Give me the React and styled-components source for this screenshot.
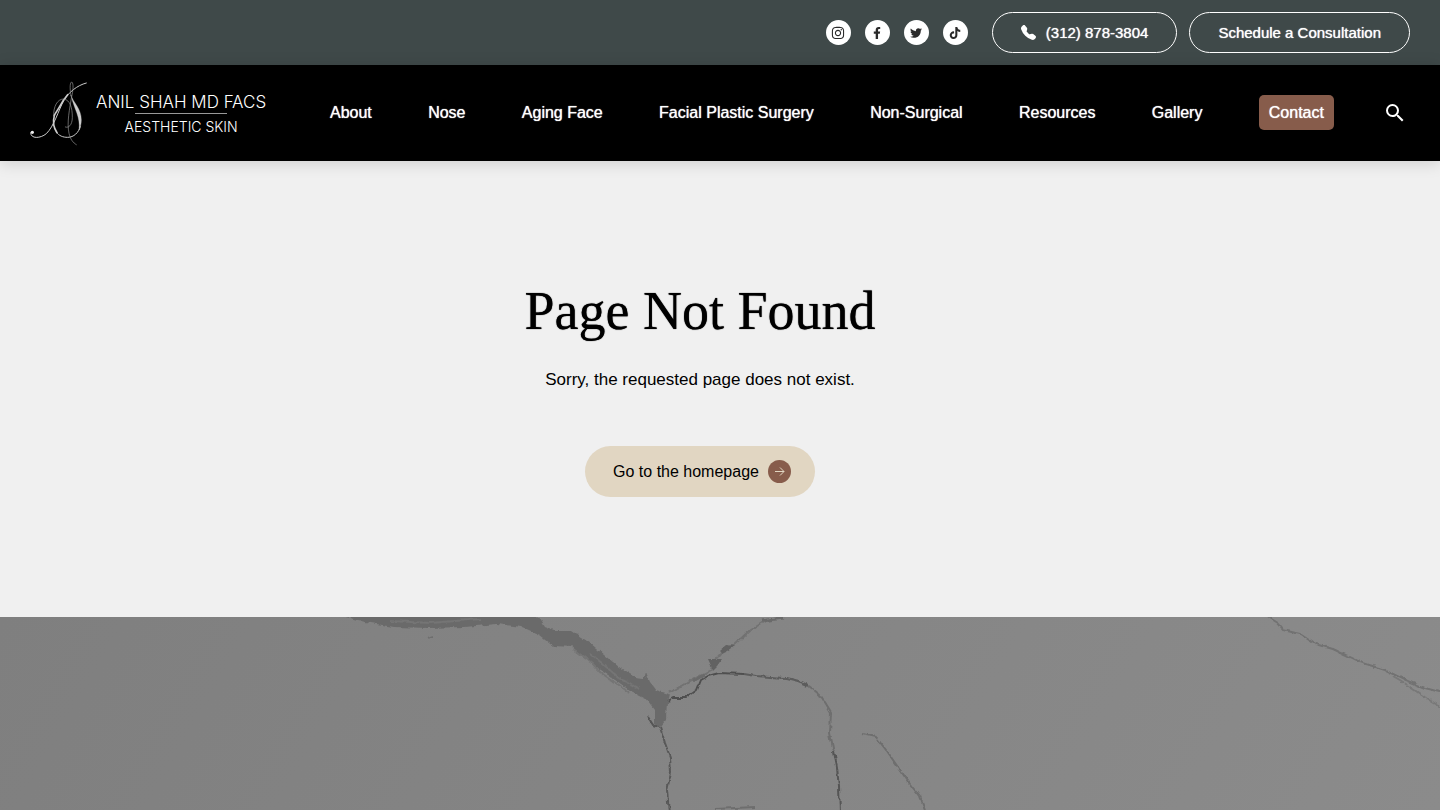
import styled, { createGlobalStyle } from "styled-components";
import { FaFacebookF, FaInstagram, FaTwitter, FaTiktok } from "react-icons/fa";
import { BsTelephoneFill } from "react-icons/bs";
import { MdSearch } from "react-icons/md";

const GlobalStyle = createGlobalStyle`
  * {
    box-sizing: border-box;
  }
  body {
    margin: 0;
    background-color: #f0f0f0;
    color: #000;
    font-family: "Liberation Sans", Arial, sans-serif;
  }
`;

const Page = styled.div`
  display: flex;
  flex-direction: column;
  min-height: 100vh;
`;

const TopBar = styled.div`
  background-color: #3f4949;
  display: flex;
  align-items: center;
  justify-content: flex-end;
  padding: 12px 30px;
`;

const SocialList = styled.div`
  display: flex;
  gap: 14px;
  margin-right: 24px;
`;

const SocialLink = styled.a`
  width: 25px;
  height: 25px;
  border-radius: 50%;
  background-color: #fff;
  color: #2a2a2a;
  font-size: ${(props) => (props.$large ? "14px" : "12px")};
  display: flex;
  align-items: center;
  justify-content: center;
`;

const TopButtons = styled.div`
  display: flex;
  gap: 12px;
`;

const OutlineButton = styled.a`
  display: flex;
  align-items: center;
  gap: 10px;
  height: 41px;
  padding: 0 28px;
  border: 1px solid #fff;
  border-radius: 21px;
  color: #fff;
  font-size: 15px;
  text-decoration: none;
  text-shadow: 0 0 1px #fff;
  white-space: nowrap;
`;

const NavBar = styled.header`
  background-color: #000;
  display: flex;
  align-items: center;
  height: 96px;
  padding: 0 33px 1px 30px;
  box-shadow: 0 2px 15px rgba(0, 0, 0, 0.15);
`;

const Logo = styled.a`
  display: flex;
  align-items: center;
  gap: 9px;
  width: 240px;
  padding-top: 4px;
  color: #fff;
  text-decoration: none;
`;

const LogoText = styled.span`
  display: flex;
  flex-direction: column;
  align-items: center;
  font-family: Inter, sans-serif;
  font-weight: 300;
  white-space: nowrap;
`;

const LogoName = styled.span`
  font-size: 17px;
  line-height: 20px;
`;

const LogoRule = styled.span`
  width: 92px;
  height: 1px;
  margin: 1px 0 3px;
  background-color: #999;
`;

const LogoTagline = styled.span`
  font-size: 14px;
  line-height: 20px;
`;

const Menu = styled.nav`
  flex: 1;
  display: flex;
  align-items: center;
  justify-content: space-between;
  margin-left: 60px;
`;

const MenuLink = styled.a`
  color: #fff;
  font-size: 16px;
  line-height: 35px;
  text-decoration: none;
  text-shadow: 0 0 1px #fff;
  white-space: nowrap;
  padding: ${(props) => (props.$active ? "0 10px" : "0")};
  border-radius: 5px;
  background-color: ${(props) => (props.$active ? "#875c4b" : "transparent")};
`;

const SearchButton = styled.button`
  display: flex;
  margin-left: 49px;
  padding: 0;
  border: none;
  background: none;
  color: #fff;
  font-size: 24px;
  cursor: pointer;
`;

const Content = styled.main`
  display: flex;
  flex-direction: column;
  align-items: center;
  padding: 120px 40px 120px 0;
`;

const Title = styled.h1`
  margin: 0;
  font-family: "Liberation Serif", "Times New Roman", serif;
  font-size: 54px;
  font-weight: 400;
  line-height: 60px;
  text-shadow: 0 0 1px #000;
`;

const Desc = styled.p`
  margin: 25px 0 53px;
  font-size: 17px;
  line-height: 27px;
`;

const HomeButton = styled.a`
  display: flex;
  align-items: center;
  gap: 9px;
  height: 51px;
  padding: 0 24px 0 28px;
  border-radius: 26px;
  background-color: #e1d6c2;
  color: #000;
  font-size: 16px;
  text-decoration: none;
`;

const Marble = styled.section`
  flex: 1;
  min-height: 193px;
  display: flex;
  background: linear-gradient(120deg, #7f7f7f, #858585 50%, #8b8b8b);
`;

const MarbleArt = styled.svg`
  width: 100%;
  height: 193px;
`;

const socials = [
  { name: "Instagram", icon: <FaInstagram />, large: true },
  { name: "Facebook", icon: <FaFacebookF /> },
  { name: "Twitter", icon: <FaTwitter /> },
  { name: "TikTok", icon: <FaTiktok /> },
];

const menu = [
  "About",
  "Nose",
  "Aging Face",
  "Facial Plastic Surgery",
  "Non-Surgical",
  "Resources",
  "Gallery",
  "Contact",
];

const Monogram = () => (
  <svg width="57" height="67" viewBox="11 9 171 201" fill="none" stroke="#ccc" strokeLinecap="round">
    <circle cx="18" cy="163" r="5" fill="#eee" stroke="none" />
    <path strokeWidth="3" d="M13 165C13 183 42 182 60 167C83 145 96 98 112 68C126 44 152 22 180 15" />
    <path strokeWidth="5" d="M84 112C92 98 104 80 112 66L124 50" />
    <path strokeWidth="5" d="M84 112C79 132 82 150 92 164" />
    <path strokeWidth="3" d="M90 162C98 174 110 178 124 178C142 178 157 164 162 146" />
    <path fill="#ccc" strokeWidth="1" d="M134 52C142 76 165 92 165 126C165 138 162 148 158 156C163 116 144 96 134 52Z" />
    <path stroke="#999" strokeWidth="2" d="M82 118C80 84 94 63 112 63C132 66 138 90 138 118C138 142 126 151 117 147" />
    <path stroke="#999" strokeWidth="2" d="M134 54C129 26 132 12 136 12C143 16 140 40 136 56C130 90 121 134 128 166C132 184 140 194 150 200" />
  </svg>
);

const ArrowIcon = () => (
  <svg width="23" height="23" viewBox="0 0 23 23" fill="none" aria-hidden="true">
    <circle cx="11.5" cy="11.5" r="11.5" fill="#875c4b" />
    <path d="M7 11.5H16M12 7.5L16 11.5L12 15.5" stroke="#e1d6c2" strokeWidth="1" />
  </svg>
);

const Cracks = () => (
  <MarbleArt viewBox="0 0 1440 193" preserveAspectRatio="xMidYMin slice" aria-hidden="true">
    <defs>
      <filter id="rough" x="0" y="0" width="1440" height="193" filterUnits="userSpaceOnUse">
        <feTurbulence type="fractalNoise" baseFrequency="0.12" numOctaves="3" seed="4" />
        <feDisplacementMap in="SourceGraphic" scale="5" xChannelSelector="R" yChannelSelector="G" />
        <feGaussianBlur stdDeviation="0.6" />
      </filter>
    </defs>
    <g filter="url(#rough)" fill="none" strokeLinejoin="round">
      <path
        fill="#6b6b6b"
        d="M334 -3H536L544 10L554 14L572 14L590 26L604 38L619 50L636 61L644 62L646 55L650 65L656 73L669 77L667 85L666 103L660 110L654 106L654 93L645 81L629 73L615 63L594 48L572 30L554 29L540 18L522 10L497 7L465 10L429 11L394 10L365 5Z"
      />
      <path stroke="#747474" strokeWidth="2" d="M574 33L592 46L600 55L630 76" />
      <path stroke="#747474" strokeWidth="2" d="M390 4L430 6L480 2M590 36L618 60L640 72" />
      <path stroke="#555" strokeWidth="2" d="M648 100L653 108L659 110" />
      <path stroke="#505050" strokeWidth="2" d="M667 84L672 81L686 81L697 73L701 63L708 59L719 56L744 57" />
      <path stroke="#5c5c5c" strokeWidth="2" d="M744 57L756 59L769 60L786 61L798 64L808 68" />
      <path stroke="#6e6e6e" strokeWidth="2" d="M808 68L820 78L831 96L830 116L834 135" />
      <path stroke="#545454" strokeWidth="2" d="M834 135L837 150L839 170L840 196" />
      <path stroke="#585858" strokeWidth="2" d="M660 110L665 126L670 140L671 155L667 173L669 196" />
      <path stroke="#727272" strokeWidth="2" d="M669 76L688 65L701 58L711 53L713 45L724 33L735 28L751 13L765 4L783 0" />
      <path fill="#626262" d="M708 42L722 42L717 49L713 53ZM719 34L726 28L735 29L728 34L722 37Z" />
      <path stroke="#6a6a6a" strokeWidth="3" d="M693 64L704 58M762 4L783 1" />
      <path stroke="#6e6e6e" strokeWidth="2" d="M863 117L876 120L886 133L900 153L910 167L920 180L926 196" />
      <path stroke="#727272" strokeWidth="2" d="M1264 -2L1277 6L1283 13L1300 17L1315 27L1333 32L1360 45L1385 53L1405 63L1425 71L1444 76" />
      <path stroke="#787878" strokeWidth="2" d="M1393 60L1410 70L1426 81L1444 92" />
      <path stroke="#6e6e6e" strokeWidth="2" d="M427 22L432 20M715 192L755 190" />
    </g>
  </MarbleArt>
);

const App = () => {
  return (
    <Page>
      <GlobalStyle />
      <TopBar>
        <SocialList>
          {socials.map((item) => (
            <SocialLink
              key={item.name}
              href="#"
              aria-label={item.name}
              $large={item.large}
            >
              {item.icon}
            </SocialLink>
          ))}
        </SocialList>
        <TopButtons>
          <OutlineButton href="tel:3128783804">
            <BsTelephoneFill />
            (312) 878-3804
          </OutlineButton>
          <OutlineButton href="#">Schedule a Consultation</OutlineButton>
        </TopButtons>
      </TopBar>
      <NavBar>
        <Logo href="#">
          <Monogram />
          <LogoText>
            <LogoName>ANIL SHAH MD FACS</LogoName>
            <LogoRule />
            <LogoTagline>AESTHETIC SKIN</LogoTagline>
          </LogoText>
        </Logo>
        <Menu>
          {menu.map((item) => (
            <MenuLink key={item} href="#" $active={item === "Contact"}>
              {item}
            </MenuLink>
          ))}
        </Menu>
        <SearchButton type="button" aria-label="Search">
          <MdSearch />
        </SearchButton>
      </NavBar>
      <Content>
        <Title>Page Not Found</Title>
        <Desc>Sorry, the requested page does not exist.</Desc>
        <HomeButton href="#">
          Go to the homepage
          <ArrowIcon />
        </HomeButton>
      </Content>
      <Marble>
        <Cracks />
      </Marble>
    </Page>
  );
};

export default App;
